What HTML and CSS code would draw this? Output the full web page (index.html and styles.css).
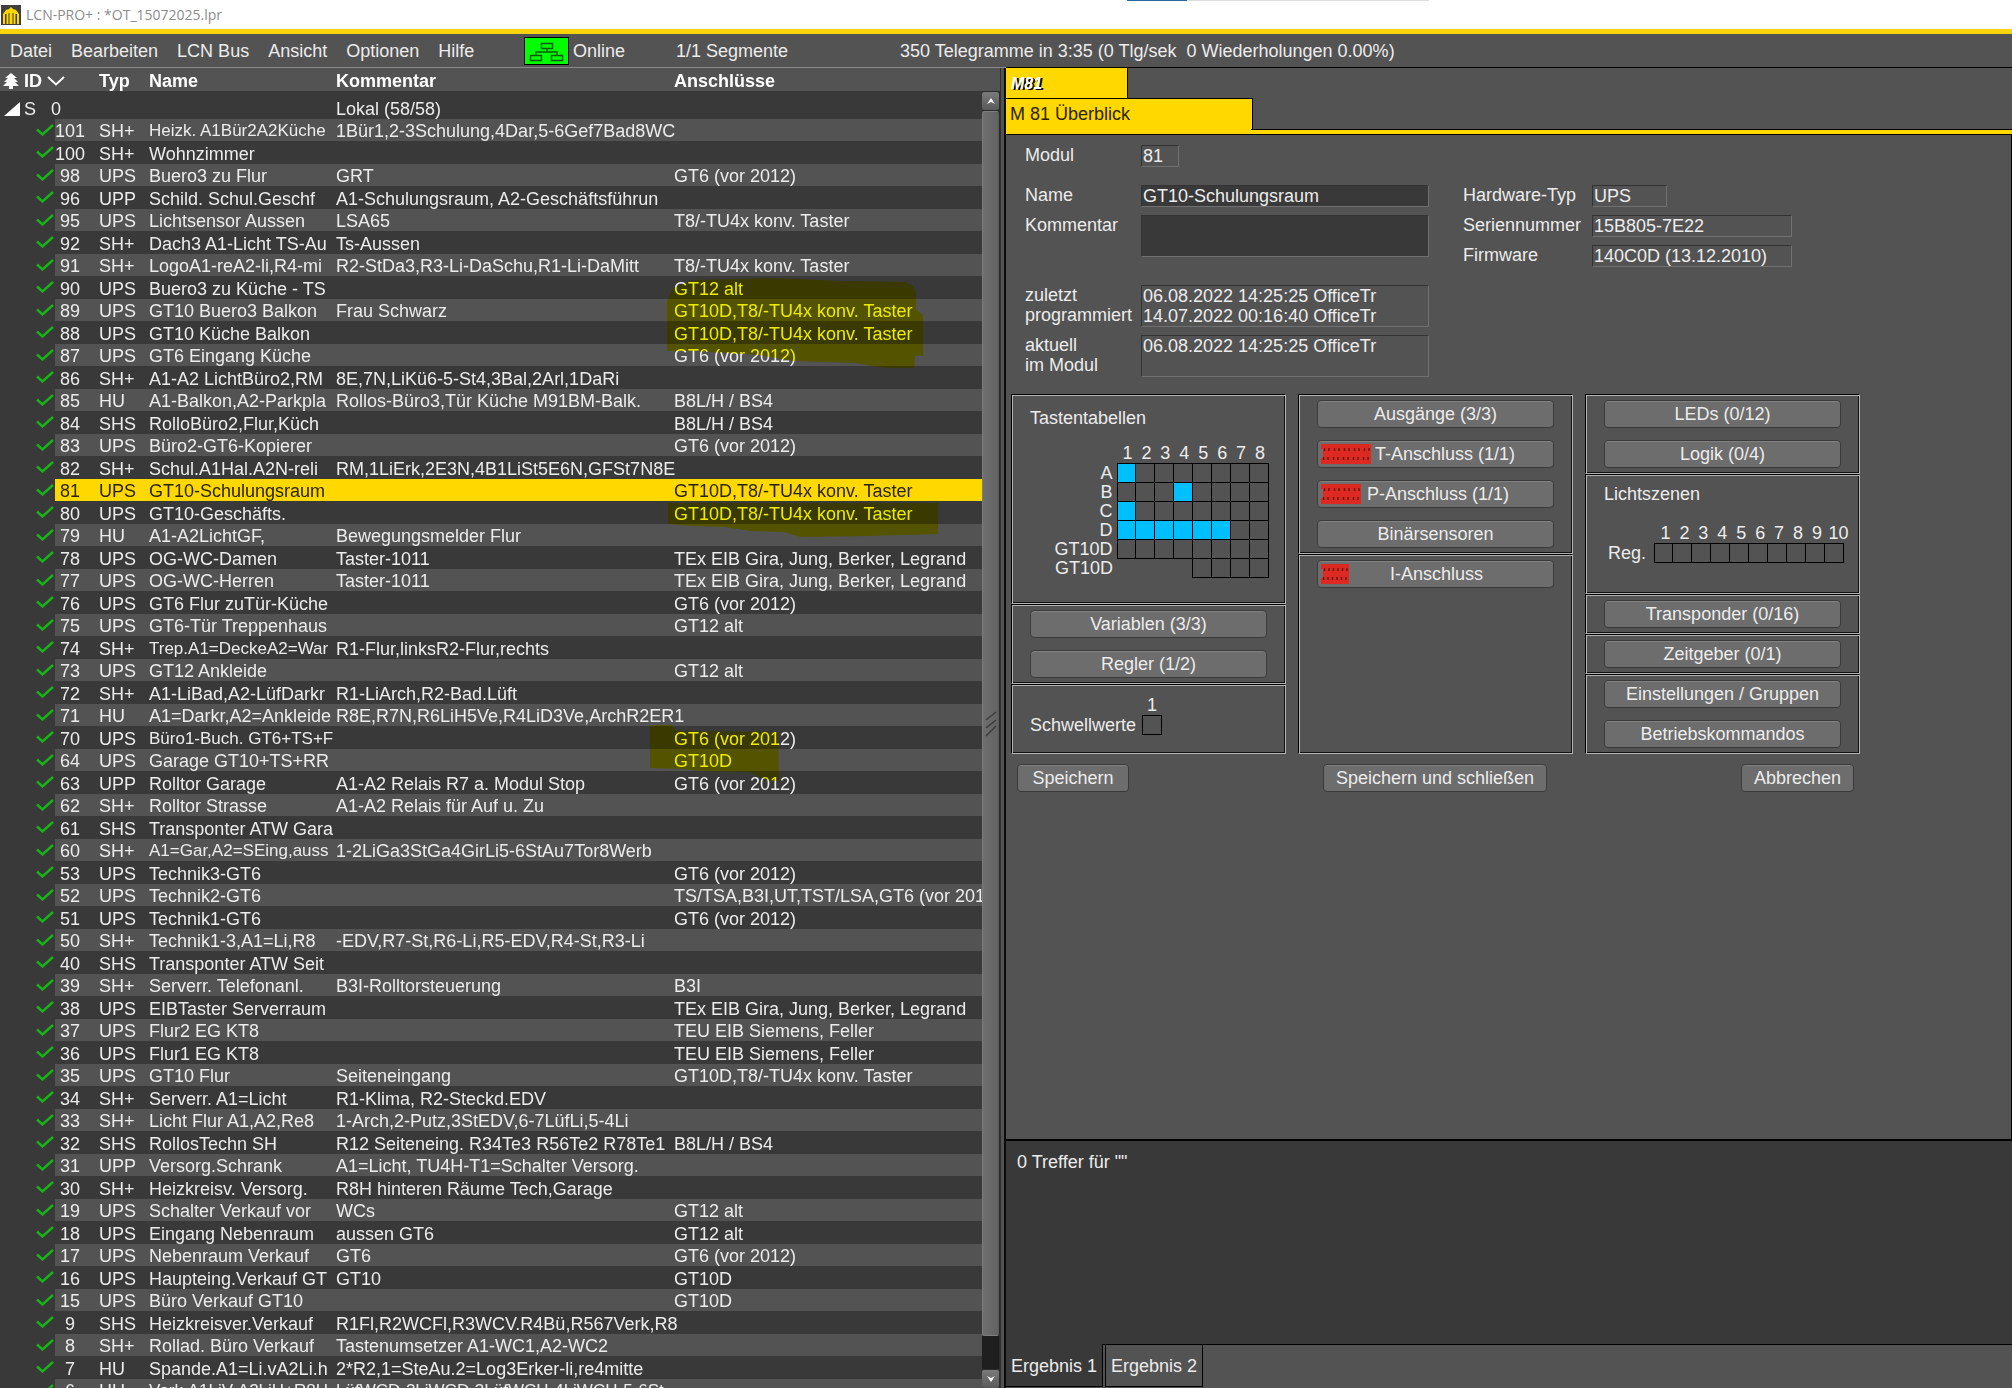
FILE: index.html
```html
<!DOCTYPE html>
<html lang="de">
<head>
<meta charset="utf-8">
<title>LCN-PRO+</title>
<link rel="stylesheet" href="styles.css">
</head>
<body>
<svg class="defs" aria-hidden="true">
  <symbol id="pin-row" viewBox="0 0 10 20">
    <rect width="10" height="20" fill="#dc2a22"/>
    <path d="M3.500 4v3M8 4v3M2.500 13v3M7 13v3" stroke="#6e1512" stroke-width="1.5"/>
  </symbol>
</svg>

<header class="titlebar">
  <svg class="logo" viewBox="0 0 20 20" aria-hidden="true">
    <rect width="20" height="20" fill="#3f3f3f"/>
    <path d="M2 19V9l3-4 3-1 2-2 2 2 3 1 3 4v10h-2V9h-1.500v10h-2V8h-1v11h-3V8h-1v11h-2V9H4v10z" fill="#ffd800"/>
  </svg>
  <span>LCN-PRO+ : *OT_15072025.lpr</span>
  <i class="load-line"></i>
</header>

<nav class="menubar">
  <div class="menus">
    <button>Datei</button><button>Bearbeiten</button><button>LCN Bus</button><button>Ansicht</button><button>Optionen</button><button>Hilfe</button>
  </div>
  <svg class="net" viewBox="0 0 45 28" aria-hidden="true">
    <rect x=".5" y=".5" width="44" height="27" fill="#00ff00" stroke="#000"/>
    <path d="M17.500 6.500h11v5h-11zM6.500 18.500h11v5h-11zM27.500 18.500h11v5h-11zM23 11.500v3M12 18v-3h21v3" fill="none" stroke="#0a5a0a" stroke-width="1.500"/>
  </svg>
  <span class="online">Online</span>
  <span class="segments">1/1 Segmente</span>
  <span class="telegrams">350 Telegramme in 3:35 (0 Tlg/sek&nbsp; 0 Wiederholungen 0.00%)</span>
</nav>

<main class="split">
<section class="list-pane">
<div class="list">
<table class="modules">
<colgroup><col class="c-tree"><col class="c-id"><col class="c-typ"><col class="c-name"><col class="c-kom"><col></colgroup>
<thead>
<tr><th colspan="2"><span class="id-head"><svg width="16" height="16" viewBox="0 0 16 16" aria-hidden="true"><path d="M8 0l6 5h-3l4 4h-3l4 4h-6v3H6v-3H0l4-4H1l4-4H2z" fill="#fff"/></svg>ID<svg width="18" height="10" viewBox="0 0 18 10" aria-hidden="true"><path d="M1 1l8 7.500L17 1" fill="none" stroke="#fff" stroke-width="2"/></svg></span></th><th>Typ</th><th>Name</th><th>Kommentar</th><th>Anschlüsse</th></tr>
</thead>
<tbody class="seg">
<tr><td colspan="2"><span class="seg-head"><svg width="16" height="14" viewBox="0 0 16 14" aria-hidden="true"><path d="M0 14L16 0v14z" fill="#fff"/></svg>S<b>0</b></span></td><td></td><td></td><td>Lokal (58/58)</td><td></td></tr>
</tbody>
<tbody class="rows">
<tr><td><td>101<td>SH+<td class="long">Heizk. A1Bür2A2Küche<td>1Bür1,2-3Schulung,4Dar,5-6Gef7Bad8WC<td>
<tr><td><td>100<td>SH+<td>Wohnzimmer<td><td>
<tr><td><td>98<td>UPS<td>Buero3 zu Flur<td>GRT<td>GT6 (vor 2012)
<tr><td><td>96<td>UPP<td>Schild. Schul.Geschf<td>A1-Schulungsraum, A2-Geschäftsführun<td>
<tr><td><td>95<td>UPS<td>Lichtsensor Aussen<td>LSA65<td>T8/-TU4x konv. Taster
<tr><td><td>92<td>SH+<td>Dach3 A1-Licht TS-Au<td>Ts-Aussen<td>
<tr><td><td>91<td>SH+<td>LogoA1-reA2-li,R4-mi<td>R2-StDa3,R3-Li-DaSchu,R1-Li-DaMitt<td>T8/-TU4x konv. Taster
<tr><td><td>90<td>UPS<td>Buero3 zu Küche - TS<td><td>GT12 alt
<tr><td><td>89<td>UPS<td>GT10 Buero3 Balkon<td>Frau Schwarz<td>GT10D,T8/-TU4x konv. Taster
<tr><td><td>88<td>UPS<td>GT10 Küche Balkon<td><td>GT10D,T8/-TU4x konv. Taster
<tr><td><td>87<td>UPS<td>GT6 Eingang Küche<td><td>GT6 (vor 2012)
<tr><td><td>86<td>SH+<td>A1-A2 LichtBüro2,RM<td>8E,7N,LiKü6-5-St4,3Bal,2Arl,1DaRi<td>
<tr><td><td>85<td>HU<td>A1-Balkon,A2-Parkpla<td>Rollos-Büro3,Tür Küche M91BM-Balk.<td>B8L/H / BS4
<tr><td><td>84<td>SHS<td>RolloBüro2,Flur,Küch<td><td>B8L/H / BS4
<tr><td><td>83<td>UPS<td>Büro2-GT6-Kopierer<td><td>GT6 (vor 2012)
<tr><td><td>82<td>SH+<td>Schul.A1Hal.A2N-reli<td>RM,1LiErk,2E3N,4B1LiSt5E6N,GFSt7N8E<td>
<tr class="selected"><td><td>81<td>UPS<td>GT10-Schulungsraum<td><td>GT10D,T8/-TU4x konv. Taster
<tr><td><td>80<td>UPS<td>GT10-Geschäfts.<td><td>GT10D,T8/-TU4x konv. Taster
<tr><td><td>79<td>HU<td>A1-A2LichtGF,<td>Bewegungsmelder Flur<td>
<tr><td><td>78<td>UPS<td>OG-WC-Damen<td>Taster-1011<td>TEx EIB Gira, Jung, Berker, Legrand
<tr><td><td>77<td>UPS<td>OG-WC-Herren<td>Taster-1011<td>TEx EIB Gira, Jung, Berker, Legrand
<tr><td><td>76<td>UPS<td>GT6 Flur zuTür-Küche<td><td>GT6 (vor 2012)
<tr><td><td>75<td>UPS<td>GT6-Tür Treppenhaus<td><td>GT12 alt
<tr><td><td>74<td>SH+<td class="long">Trep.A1=DeckeA2=War<td>R1-Flur,linksR2-Flur,rechts<td>
<tr><td><td>73<td>UPS<td>GT12 Ankleide<td><td>GT12 alt
<tr><td><td>72<td>SH+<td>A1-LiBad,A2-LüfDarkr<td>R1-LiArch,R2-Bad.Lüft<td>
<tr><td><td>71<td>HU<td>A1=Darkr,A2=Ankleide<td>R8E,R7N,R6LiH5Ve,R4LiD3Ve,ArchR2ER1<td>
<tr><td><td>70<td>UPS<td class="long">Büro1-Buch. GT6+TS+F<td><td>GT6 (vor 2012)
<tr><td><td>64<td>UPS<td>Garage GT10+TS+RR<td><td>GT10D
<tr><td><td>63<td>UPP<td>Rolltor Garage<td>A1-A2 Relais R7 a. Modul Stop<td>GT6 (vor 2012)
<tr><td><td>62<td>SH+<td>Rolltor Strasse<td>A1-A2 Relais für Auf u. Zu<td>
<tr><td><td>61<td>SHS<td>Transponter ATW Gara<td><td>
<tr><td><td>60<td>SH+<td class="long">A1=Gar,A2=SEing,auss<td>1-2LiGa3StGa4GirLi5-6StAu7Tor8Werb<td>
<tr><td><td>53<td>UPS<td>Technik3-GT6<td><td>GT6 (vor 2012)
<tr><td><td>52<td>UPS<td>Technik2-GT6<td><td>TS/TSA,B3I,UT,TST/LSA,GT6 (vor 2012)
<tr><td><td>51<td>UPS<td>Technik1-GT6<td><td>GT6 (vor 2012)
<tr><td><td>50<td>SH+<td>Technik1-3,A1=Li,R8<td>-EDV,R7-St,R6-Li,R5-EDV,R4-St,R3-Li<td>
<tr><td><td>40<td>SHS<td>Transponter ATW Seit<td><td>
<tr><td><td>39<td>SH+<td>Serverr. Telefonanl.<td>B3I-Rolltorsteuerung<td>B3I
<tr><td><td>38<td>UPS<td>EIBTaster Serverraum<td><td>TEx EIB Gira, Jung, Berker, Legrand
<tr><td><td>37<td>UPS<td>Flur2 EG KT8<td><td>TEU EIB Siemens, Feller
<tr><td><td>36<td>UPS<td>Flur1 EG KT8<td><td>TEU EIB Siemens, Feller
<tr><td><td>35<td>UPS<td>GT10 Flur<td>Seiteneingang<td>GT10D,T8/-TU4x konv. Taster
<tr><td><td>34<td>SH+<td>Serverr. A1=Licht<td>R1-Klima, R2-Steckd.EDV<td>
<tr><td><td>33<td>SH+<td>Licht Flur A1,A2,Re8<td>1-Arch,2-Putz,3StEDV,6-7LüfLi,5-4Li<td>
<tr><td><td>32<td>SHS<td>RollosTechn SH<td>R12 Seiteneing. R34Te3 R56Te2 R78Te1<td>B8L/H / BS4
<tr><td><td>31<td>UPP<td>Versorg.Schrank<td>A1=Licht, TU4H-T1=Schalter Versorg.<td>
<tr><td><td>30<td>SH+<td>Heizkreisv. Versorg.<td>R8H hinteren Räume Tech,Garage<td>
<tr><td><td>19<td>UPS<td>Schalter Verkauf vor<td>WCs<td>GT12 alt
<tr><td><td>18<td>UPS<td>Eingang Nebenraum<td>aussen GT6<td>GT12 alt
<tr><td><td>17<td>UPS<td>Nebenraum Verkauf<td>GT6<td>GT6 (vor 2012)
<tr><td><td>16<td>UPS<td>Haupteing.Verkauf GT<td>GT10<td>GT10D
<tr><td><td>15<td>UPS<td>Büro Verkauf GT10<td><td>GT10D
<tr><td><td>9<td>SHS<td>Heizkreisver.Verkauf<td>R1Fl,R2WCFl,R3WCV.R4Bü,R567Verk,R8<td>
<tr><td><td>8<td>SH+<td>Rollad. Büro Verkauf<td>Tastenumsetzer A1-WC1,A2-WC2<td>
<tr><td><td>7<td>HU<td>Spande.A1=Li.vA2Li.h<td>2*R2,1=SteAu.2=Log3Erker-li,re4mitte<td>
<tr><td><td>6<td>HU<td class="long">Vork.A1LiV-A2LiH+R8H<td class="long">LüfWCD-2LiWCD-3LüfWCH-4LiWCH-5-6St<td>
</tbody>
</table>
<svg class="marker" width="290" height="520" viewBox="660 270 290 520" aria-hidden="true">
  <path fill="#ffff00" d="M667 302L671 291 675 287 694 280 776 278 840 281 905 282 913 286 916 293V310L923 315V356H915L914 368H887L855 363 823 362 794 361 759 355 694 351H667z"/>
  <path fill="#ffff00" d="M668 503H938V534L870 536 801 537 783 532 750 531 725 527 694 526 668 524z"/>
</svg>
<svg class="marker low" width="140" height="60" viewBox="650 725 140 60" aria-hidden="true">
  <path fill="#ffff00" d="M650 725H672L676 731 778 732 779 781H770L758 776 750 772 700 771 682 769 650 768z"/>
</svg>
</div>
<div class="scroll">
  <button aria-label="Nach oben"><svg width="8" height="6" viewBox="0 0 8 6"><path d="M4 0l4 6-4-2-4 2z" fill="#fff"/></svg></button>
  <div class="track"><div class="thumb"><svg width="12" height="26" viewBox="0 0 12 26" aria-hidden="true"><path d="M1 9L11 1M1 17L11 9M1 25L11 15" stroke="#3c3c3c" stroke-width="1.500"/></svg></div></div>
  <button aria-label="Nach unten"><svg width="8" height="6" viewBox="0 0 8 6"><path d="M0 0l4 2 4-2-4 6z" fill="#fff"/></svg></button>
</div>
<div class="splitter"></div>
</section>

<section class="detail">
  <div class="tabs">
    <button class="tab tab-module">M81</button>
    <button class="tab tab-view">M 81 Überblick</button>
    <div class="strip"></div>
  </div>
  <form class="work">
    <div class="fields">
      <div class="fcol">
        <div class="field modul"><label for="f-modul">Modul</label><input id="f-modul" class="w-xs" value="81" readonly></div>
        <div class="field"><label for="f-name">Name</label><input id="f-name" class="edit w-lg" value="GT10-Schulungsraum"></div>
        <div class="field kom"><label for="f-kom">Kommentar</label><textarea id="f-kom" class="edit w-lg"></textarea></div>
        <div class="field"><label for="f-prog">zuletzt<br>programmiert</label><textarea id="f-prog" class="w-lg" readonly>06.08.2022 14:25:25 OfficeTr
14.07.2022 00:16:40 OfficeTr</textarea></div>
        <div class="field"><label for="f-akt">aktuell<br>im Modul</label><textarea id="f-akt" class="w-lg" readonly>06.08.2022 14:25:25 OfficeTr</textarea></div>
      </div>
      <div class="fcol hw">
        <div class="field"><label for="f-hw">Hardware-Typ</label><input id="f-hw" class="w-sm" value="UPS" readonly></div>
        <div class="field"><label for="f-ser">Seriennummer</label><input id="f-ser" class="w-md" value="15B805-7E22" readonly></div>
        <div class="field"><label for="f-fw">Firmware</label><input id="f-fw" class="w-md" value="140C0D (13.12.2010)" readonly></div>
      </div>
    </div>

    <div class="boxes">
      <div class="bcol">
        <div class="box keys">
          <h2>Tastentabellen</h2>
          <table class="grid">
            <tr><td></td><th>1</th><th>2</th><th>3</th><th>4</th><th>5</th><th>6</th><th>7</th><th>8</th></tr>
            <tr><th>A</th><td class="c on"><td class="c"><td class="c"><td class="c"><td class="c"><td class="c"><td class="c"><td class="c"></tr>
            <tr><th>B</th><td class="c"><td class="c"><td class="c"><td class="c on"><td class="c"><td class="c"><td class="c"><td class="c"></tr>
            <tr><th>C</th><td class="c on"><td class="c"><td class="c"><td class="c"><td class="c"><td class="c"><td class="c"><td class="c"></tr>
            <tr><th>D</th><td class="c on"><td class="c on"><td class="c on"><td class="c on"><td class="c on"><td class="c on"><td class="c"><td class="c"></tr>
            <tr><th>GT10D</th><td class="c"><td class="c"><td class="c"><td class="c"><td class="c"><td class="c"><td class="c"><td class="c"></tr>
            <tr><th>GT10D</th><td><td><td><td><td class="c"><td class="c"><td class="c"><td class="c"></tr>
          </table>
        </div>
        <div class="box"><button type="button">Variablen (3/3)</button><button type="button">Regler (1/2)</button></div>
        <div class="box thresholds"><span>Schwellwerte</span><div class="thr"><span>1</span><i></i></div></div>
      </div>
      <div class="bcol">
        <div class="box">
          <button type="button">Ausgänge (3/3)</button>
          <button type="button" class="plug"><svg width="51" height="20" viewBox="0 0 51 20" aria-hidden="true"><use href="#pin-row" width="10" height="20"/><use href="#pin-row" x="10" width="10" height="20"/><use href="#pin-row" x="20" width="10" height="20"/><use href="#pin-row" x="30" width="10" height="20"/><use href="#pin-row" x="40" width="10" height="20"/><path d="M0 5h2v9H0z" fill="#6d6d6d"/></svg><span>T-Anschluss (1/1)</span></button>
          <button type="button" class="plug"><svg width="40" height="20" viewBox="0 0 40 20" aria-hidden="true"><use href="#pin-row" width="10" height="20"/><use href="#pin-row" x="10" width="10" height="20"/><use href="#pin-row" x="20" width="10" height="20"/><use href="#pin-row" x="30" width="10" height="20"/><path d="M0 5h2v9H0z" fill="#6d6d6d"/></svg><span>P-Anschluss (1/1)</span></button>
          <button type="button">Binärsensoren</button>
        </div>
        <div class="box fill"><button type="button" class="plug solo"><svg width="28" height="20" viewBox="0 0 28 20" aria-hidden="true"><use href="#pin-row" width="10" height="20"/><use href="#pin-row" x="9" width="10" height="20"/><use href="#pin-row" x="18" width="10" height="20"/><path d="M0 5h2v9H0z" fill="#6d6d6d"/></svg><span>I-Anschluss</span></button></div>
      </div>
      <div class="bcol">
        <div class="box"><button type="button">LEDs (0/12)</button><button type="button">Logik (0/4)</button></div>
        <div class="box scenes">
          <h2>Lichtszenen</h2>
          <table class="grid">
            <tr><td></td><th>1</th><th>2</th><th>3</th><th>4</th><th>5</th><th>6</th><th>7</th><th>8</th><th>9</th><th>10</th></tr>
            <tr><th>Reg.</th><td class="c"><td class="c"><td class="c"><td class="c"><td class="c"><td class="c"><td class="c"><td class="c"><td class="c"><td class="c"></tr>
          </table>
        </div>
        <div class="box"><button type="button">Transponder (0/16)</button></div>
        <div class="box"><button type="button">Zeitgeber (0/1)</button></div>
        <div class="box"><button type="button">Einstellungen / Gruppen</button><button type="button">Betriebskommandos</button></div>
      </div>
    </div>
    <div class="actions"><button type="button">Speichern</button><button type="button">Speichern und schließen</button><button type="button">Abbrechen</button></div>
  </form>
  <div class="results">0 Treffer für ""</div>
  <div class="result-tabs"><button class="current">Ergebnis 1</button><button>Ergebnis 2</button></div>
</section>
</main>
</body>
</html>
```
FILE: styles.css
```css
* { box-sizing: border-box; }

:root {
  --bg: #535353;
  --dark: #393939;
  --text: #ececec;
  --yellow: #ffd800;
  --edge: #707070;
}

body {
  margin: 0;
  height: 100vh;
  overflow: hidden;
  display: flex;
  flex-direction: column;
  background: var(--bg);
  color: var(--text);
  font: 18px/20px "Liberation Sans", Arial, sans-serif;
}

button, input, textarea { font: inherit; color: inherit; margin: 0; }
button { border: 0; padding: 0; background: none; white-space: nowrap; }
.defs { position: absolute; width: 0; height: 0; }

/* Title bar */
.titlebar {
  position: relative;
  display: flex;
  align-items: center;
  gap: 5px;
  height: 34px;
  padding: 0 1px;
  border-bottom: 5px solid #fcd40c;
  background: #fff;
  color: #8c8c8c;
  font: 14px/20px "Open Sans", "Noto Sans", sans-serif;
}
.logo { width: 20px; height: 20px; }
.load-line {
  position: absolute;
  top: 0;
  left: 56%;
  width: 15%;
  height: 1px;
  background: linear-gradient(90deg, #2a66a0 20%, #dedede 20%);
}

/* Menu bar */
.menubar { display: flex; align-items: center; height: 33px; padding-left: 10px; flex: none; white-space: nowrap; }
.menus { display: flex; gap: 19px; width: 514px; }
.net { width: 45px; height: 28px; }
.online { width: 107px; padding-left: 4px; }
.segments { width: 224px; }

/* Split view */
.split { flex: 1; min-height: 0; display: grid; grid-template-columns: minmax(0, 1fr) minmax(0, 1fr); }
.list-pane { display: flex; min-height: 0; min-width: 0; background: var(--dark); border-top: 1px solid #8a8a8a; }
.list { position: relative; flex: 1; min-width: 0; overflow: hidden; isolation: isolate; background: var(--dark); }

.modules { width: 100%; table-layout: fixed; border-collapse: collapse; }
.c-tree { width: 55px; }
.c-id { width: 30px; }
.c-typ { width: 64px; }
.c-name { width: 187px; }
.c-kom { width: 338px; }
.modules th, .modules td { padding: 2px 0 0; text-align: left; white-space: nowrap; line-height: 20px; }
.modules th { height: 23px; padding-top: 3px; background: var(--bg); color: #fff; font-weight: bold; }
.modules th:nth-child(2) { padding-left: 14px; }
.modules .seg td { height: 28px; padding-top: 8px; }
.modules .long { font-size: 17px; }
.id-head, .seg-head { display: flex; align-items: center; }
.id-head { gap: 5px; padding-left: 3px; }
.seg-head { padding-left: 4px; gap: 4px; }
.seg-head b { font-weight: normal; padding-left: 11px; }
.rows tr { height: 23px; }
.rows tr:nth-child(odd) { height: 22px; }
.rows tr:nth-child(odd) td:not(:first-child) { background: var(--bg); }
.rows td:first-child {
  background: url("data:image/svg+xml,%3Csvg xmlns='http://www.w3.org/2000/svg' width='18' height='12'%3E%3Cpath d='M1 5.500L6.500 10.500 17 1' fill='none' stroke='%2317b317' stroke-width='2.400'/%3E%3C/svg%3E") no-repeat 36px 5px;
}
.modules .rows td:nth-child(2) { text-align: center; }
.modules .rows td:nth-child(3) { padding-left: 14px; }
.rows tr.selected td:not(:first-child) { background: var(--yellow); color: #2a2400; }

/* Highlighter strokes drawn over the list */
.marker { position: absolute; left: 660px; top: 202px; mix-blend-mode: multiply; }
.marker.low { left: 650px; top: 657px; }

/* Scroll bar */
.scroll { width: 18px; display: flex; flex-direction: column; gap: 1px; padding: 24px 1px 0 0; background: linear-gradient(var(--bg) 23px, #2c2c2c 23px); }
.scroll button { height: 18px; border-radius: 2px; background: linear-gradient(#7a7a7a, #5a5a5a); display: flex; align-items: center; justify-content: center; flex: none; }
.track { flex: 1; background: #1f1f1f; padding-bottom: 33px; }
.thumb { height: 100%; display: flex; align-items: center; justify-content: center; border: 1px solid #7d7d7d; border-right-color: #5a5a5a; border-radius: 2px; background: linear-gradient(90deg, #6e6e6e, #636363); }
.splitter { width: 6px; background: var(--bg); border-left: 1px solid #2f2f2f; border-right: 2px solid #0c0c0c; }

/* Detail pane */
.detail { display: flex; flex-direction: column; min-width: 0; min-height: 0; border-top: 1px solid #000; }
.tab { display: block; background: var(--yellow); color: #2a2400; text-align: left; border-right: 1px solid #000; }
.tab-module {
  width: 122px;
  height: 30px;
  padding: 2px 0 0 5px;
  color: #fff;
  font-size: 16px;
  font-weight: bold;
  font-style: italic;
  text-shadow: 2px 1px 0 #000;
}
.tab-view { width: 247px; height: 31px; padding-left: 4px; border-top: 1px solid #000; }
.strip {
  height: 5px;
  border-top: 1px solid;
  border-image: linear-gradient(90deg, var(--yellow) 246px, #000 246px) 1;
  background: var(--yellow);
  box-shadow: 0 1px #000;
}

.work { flex: 1; min-height: 0; padding: 11px 0 0 4px; border-right: 1px solid #000; }
.fields { display: flex; gap: 34px; padding-left: 15px; }
.fcol { display: flex; flex-direction: column; gap: 8px; }
.hw { padding-top: 40px; }
.field { display: flex; }
.field label { width: 116px; white-space: nowrap; }
.hw label { width: 129px; }
.modul { margin-bottom: 10px; }
.kom { margin-bottom: 20px; }
.field input, .field textarea {
  display: block;
  height: 22px;
  padding: 0 1px;
  border: 1px solid var(--edge);
  border-top-color: #333;
  border-left-color: #333;
  border-radius: 0;
  background: transparent;
  resize: none;
  overflow: hidden;
  outline: 0;
}
.field textarea { height: 42px; }
.field .edit { background: var(--dark); }
.w-xs { width: 38px; }
.w-sm { width: 75px; }
.w-md { width: 200px; }
.w-lg { width: 288px; }

/* Function boxes */
.boxes { display: grid; grid-template-columns: repeat(3, 275px); column-gap: 12px; padding: 17px 0 0 1px; }
.bcol { display: flex; flex-direction: column; }
.box {
  display: flex;
  flex-direction: column;
  gap: 12px;
  padding: 5px 18px;
  border: 1px solid #000;
  border-right-color: #b4b4b4;
  border-bottom-color: #b4b4b4;
  box-shadow: inset 1px 1px #b4b4b4, inset -1px -1px #111;
}
.box.fill { flex: 1; }
.box button, .actions button {
  height: 28px;
  border: 1px solid #3a3a3a;
  border-radius: 4px;
  background: #6d6d6d;
  box-shadow: inset 0 1px #828282;
  line-height: 24px;
}
.box h2 { margin: 0; font-size: 18px; font-weight: normal; line-height: 20px; }
.plug { display: flex; align-items: center; gap: 3px; padding-left: 3px; }
.plug span { flex: 1; text-align: left; }
.plug svg[width="40"] + span { padding-left: 3px; }
.plug.solo span { padding-left: 38px; }

.grid { border-collapse: collapse; table-layout: fixed; }
.grid th { padding: 0 0 0 2px; font-weight: normal; text-align: center; line-height: 18px; height: 19px; white-space: nowrap; }
.grid td { width: 19px; height: 19px; padding: 0; }
.grid .c { border: 1px solid #000; }
.grid .on { background: #00bfff; }
.keys { height: 210px; padding-top: 13px; gap: 16px; }
.keys .grid { width: 239px; }
.keys .grid th:first-child { text-align: right; padding-right: 4px; }
.keys tr:first-child td { width: 87px; }
.scenes { height: 120px; padding-top: 9px; gap: 20px; }
.scenes .grid { width: 240px; }
.scenes .grid th { padding-left: 4px; }
.scenes tr:first-child td { width: 50px; }
.scenes .grid th:first-child { text-align: left; }

.thresholds { height: 70px; flex-direction: row; align-items: flex-end; gap: 5px; padding-bottom: 18px; }
.thr { display: flex; flex-direction: column; align-items: center; width: 22px; }
.thr i { width: 20px; height: 20px; border: 1px solid #000; }

.actions { display: flex; justify-content: space-between; width: 851px; padding: 10px 7px 0; }
.actions button { padding: 0 12px; min-width: 112px; }

/* Results */
.results { height: 206px; padding: 11px; background: var(--dark); border-top: 2px solid #000; border-bottom: 1px solid #000; flex: none; }
.result-tabs { display: flex; height: 43px; gap: 2px; padding-bottom: 1px; flex: none; }
.result-tabs button { width: 98px; border: 1px solid #000; border-top: 0; background: var(--bg); }
.result-tabs .current { width: 97px; margin-top: -1px; padding-top: 2px; border-left: 0; background: var(--dark); }
```
